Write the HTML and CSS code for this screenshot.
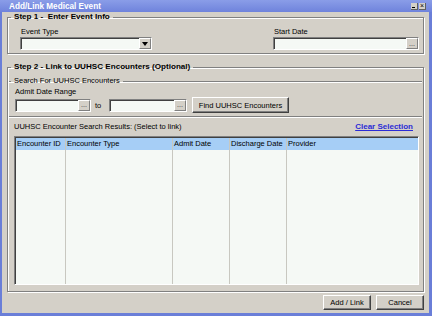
FILE: index.html
```html
<!DOCTYPE html>
<html lang="en">
<head>
    <meta charset="UTF-8">
    <title>Add/Link Medical Event</title>
    <link rel="stylesheet" href="styles.css">
</head>
<body>
    <div class="window">
        <div class="title-bar">
            <span class="title">Add/Link Medical Event</span>
            <div class="title-buttons">
                <span class="tb-btn min"></span>
                <span class="tb-btn close">&times;</span>
            </div>
        </div>
        <div class="content">
            <fieldset class="group step1">
                <legend class="step-legend">Step 1 -&nbsp; Enter Event Info</legend>
                <div class="field event-type">
                    <label>Event Type</label>
                    <div class="combo">
                        <div class="box"></div>
                        <span class="drop-btn"><span class="arrow"></span></span>
                    </div>
                </div>
                <div class="field start-date">
                    <label>Start Date</label>
                    <div class="combo">
                        <div class="box"></div>
                        <span class="dot-btn">...</span>
                    </div>
                </div>
            </fieldset>

            <fieldset class="group step2">
                <legend class="step-legend">Step 2 - Link to UUHSC Encounters (Optional)</legend>
                <fieldset class="search">
                    <legend class="sub-legend">Search For UUHSC Encounters</legend>
                    <label>Admit Date Range</label>
                    <div class="range-row">
                        <div class="combo date">
                            <div class="box"></div>
                            <span class="dot-btn">...</span>
                        </div>
                        <span class="to">to</span>
                        <div class="combo date wide">
                            <div class="box"></div>
                            <span class="dot-btn">...</span>
                        </div>
                        <button class="btn find">Find UUHSC Encounters</button>
                    </div>
                </fieldset>
                <div class="results">
                    <div class="results-head">
                        <span>UUHSC Encounter Search Results: (Select to link)</span>
                        <a href="#" class="clear">Clear Selection</a>
                    </div>
                    <div class="grid">
                        <div class="col c1"><div class="th">Encounter ID</div></div>
                        <div class="col c2"><div class="th">Encounter Type</div></div>
                        <div class="col c3"><div class="th">Admit Date</div></div>
                        <div class="col c4"><div class="th">Discharge Date</div></div>
                        <div class="col c5"><div class="th">Provider</div></div>
                    </div>
                </div>
            </fieldset>

            <div class="footer">
                <button class="btn action">Add / Link</button>
                <button class="btn action">Cancel</button>
            </div>
        </div>
    </div>
</body>
</html>
```

FILE: styles.css
```css
body, html {
    margin: 0;
    padding: 0;
    font-family: "Liberation Sans", Arial, sans-serif;
    font-size: 7.5px;
    color: #000;
}
.window {
    width: 432px;
    height: 316px;
    box-sizing: border-box;
    background-color: #d4d0c8;
    border-left: 2px solid #6a7ed8;
    border-right: 3px solid #6a7ed8;
    border-bottom: 3px solid #6a7ed8;
    display: flex;
    flex-direction: column;
}
.title-bar {
    height: 12px;
    margin-left: -2px;
    margin-right: -3px;
    background: linear-gradient(to bottom, #8a9de8, #6f83dc);
    display: flex;
    align-items: center;
    justify-content: space-between;
    padding: 0 6px 0 9px;
}
.title {
    color: #fff;
    font-weight: bold;
    font-size: 8.2px;
}
.title-buttons {
    display: flex;
    gap: 1px;
    margin-top: 1px;
}
.tb-btn {
    width: 7px;
    height: 7px;
    background-color: #d4d0c8;
    border-right: 1px solid #606060;
    border-bottom: 1px solid #606060;
    box-sizing: border-box;
    font-size: 7px;
    line-height: 5px;
    text-align: center;
    color: #000;
    position: relative;
}
.tb-btn.min::after {
    content: "";
    position: absolute;
    left: 1px;
    bottom: 1px;
    width: 3px;
    height: 1px;
    background-color: #000;
}
.content {
    flex: 1;
    display: flex;
    flex-direction: column;
    padding: 0 5px;
}
.group {
    margin: 0;
    border: 1px solid #808080;
    box-shadow: inset 1px 1px 0 #fff, 1px 1px 0 #fff;
}
.step-legend {
    font-weight: bold;
    font-size: 8.1px;
    line-height: 10px;
    padding: 0 3px;
}
.step1 {
    display: flex;
    justify-content: space-between;
    padding: 6px 4px 3px 12px;
}
.step1 .step-legend {
    margin-left: -9px;
}
.field {
    display: flex;
    flex-direction: column;
}
.field label {
    height: 9px;
    line-height: 8px;
    padding-left: 1px;
}
.combo {
    display: flex;
    height: 13px;
    box-sizing: border-box;
    background-color: #f5f9f5;
    border: 1px solid #808080;
    border-right-color: #fff;
    border-bottom-color: #fff;
    box-shadow: inset 1px 1px 0 #404040;
}
.combo .box {
    flex: 1;
}
.event-type .combo {
    width: 132px;
}
.start-date .combo {
    width: 146px;
}
.drop-btn, .dot-btn {
    width: 12px;
    background-color: #d4d0c8;
    border: 1px solid #808080;
    border-top-color: #fff;
    border-left-color: #fff;
    box-sizing: border-box;
    display: flex;
    align-items: center;
    justify-content: center;
}
.dot-btn {
    font-size: 7px;
    line-height: 6px;
    color: #333;
}
.arrow {
    width: 0;
    height: 0;
    border-left: 3px solid transparent;
    border-right: 3px solid transparent;
    border-top: 4px solid #000;
}
.step2 {
    margin-top: 8px;
    flex: 1;
    padding: 0 1px;
    display: flex;
    flex-direction: column;
}
.step2 .step-legend {
    margin-left: 2px;
}
.search {
    margin: 4px 0 0 0;
    padding: 0 6px 3px 6px;
    border: none;
    border-top: 1px solid #808080;
    border-bottom: 1px solid #808080;
    box-shadow: inset 0 1px 0 #fff, 0 1px 0 #fff;
}
.sub-legend {
    line-height: 10px;
    padding: 0 3px;
    margin-left: -4px;
}
.search label {
    display: block;
    margin-top: 1px;
    height: 10px;
    line-height: 10px;
}
.range-row {
    display: flex;
    align-items: center;
    height: 16px;
}
.combo.date {
    width: 76px;
}
.combo.date.wide {
    width: 78px;
}
.to {
    width: 18px;
    padding-left: 4px;
    box-sizing: border-box;
}
.btn {
    font-family: "Liberation Sans", Arial, sans-serif;
    font-size: 7.5px;
    background-color: #d4d0c8;
    border: 1px solid #404040;
    border-top-color: #fff;
    border-left-color: #fff;
    box-shadow: inset -1px -1px 0 #808080;
    padding: 0;
    color: #000;
    white-space: nowrap;
}
.find {
    margin-left: 5px;
    width: 97px;
    height: 16px;
}
.results {
    flex: 1;
    display: flex;
    flex-direction: column;
    padding: 0 3px 6px 5px;
}
.results-head {
    display: flex;
    justify-content: space-between;
    align-items: center;
    height: 19px;
    padding: 0 6px 0 0;
}
.clear {
    color: #2b2bd6;
    font-weight: bold;
    font-size: 8px;
}
.grid {
    flex: 1;
    display: flex;
    background-color: #f5f9f5;
    border: 1px solid #808080;
    border-right-color: #fff;
    border-bottom-color: #fff;
    box-shadow: inset 1px 1px 0 #404040;
    padding: 1px 0 0 1px;
}
.col {
    border-right: 1px solid #c8c8c0;
}
.th {
    background-color: #a6cef6;
    height: 12px;
    line-height: 12px;
    padding-left: 1px;
    white-space: nowrap;
    overflow: hidden;
}
.c1 { width: 49px; }
.c2 { width: 106px; }
.c3 { width: 56px; }
.c4 { width: 56px; }
.c5 { flex: 1; border-right: none; }
.footer {
    height: 21px;
    display: flex;
    justify-content: flex-end;
    align-items: center;
    gap: 5px;
}
.action {
    width: 48px;
    height: 15px;
}
```
